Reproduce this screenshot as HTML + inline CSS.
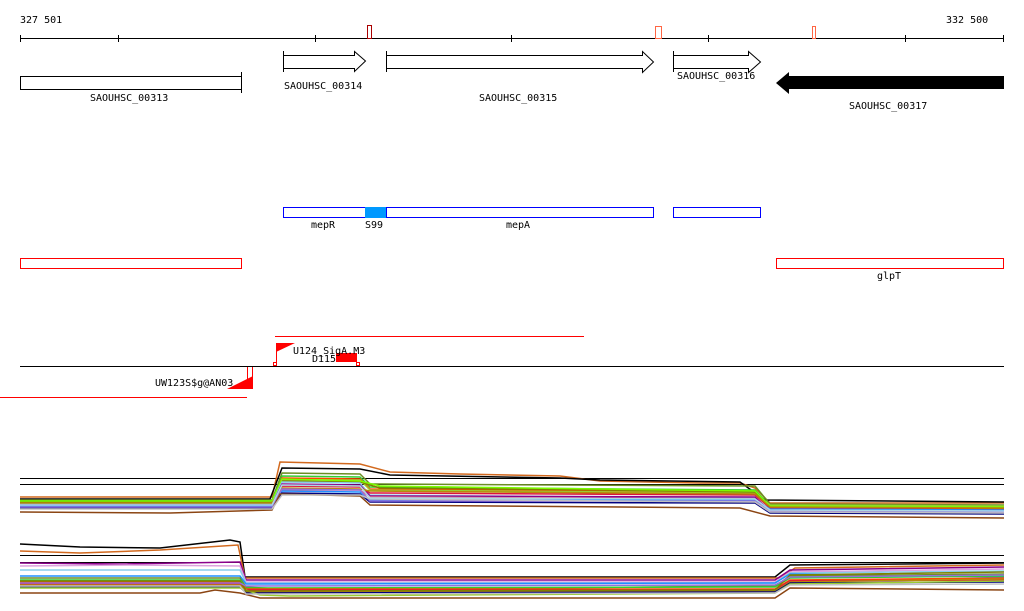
<!DOCTYPE html>
<html><head><meta charset="utf-8"><style>
html,body{margin:0;padding:0;background:#fff;}
svg{display:block}
text{font-family:"DejaVu Sans Mono","Liberation Mono",monospace;font-size:10px;fill:#000}
</style></head><body>
<svg width="1024" height="611" viewBox="0 0 1024 611" xmlns="http://www.w3.org/2000/svg" shape-rendering="crispEdges">
<text x="20" y="23">327 501</text>
<text x="946" y="23">332 500</text>
<line x1="20" y1="38.5" x2="1004" y2="38.5" stroke="#000"/>
<g stroke="#000">
<line x1="20.5" y1="35" x2="20.5" y2="42"/><line x1="118.5" y1="35" x2="118.5" y2="42"/>
<line x1="315.5" y1="35" x2="315.5" y2="42"/><line x1="511.5" y1="35" x2="511.5" y2="42"/>
<line x1="708.5" y1="35" x2="708.5" y2="42"/><line x1="905.5" y1="35" x2="905.5" y2="42"/>
<line x1="1003.5" y1="35" x2="1003.5" y2="42"/></g>
<rect x="367.5" y="25.5" width="4" height="13" fill="#fff" stroke="#a00"/>
<rect x="655.5" y="26.5" width="6" height="12" fill="#fff" stroke="#f64"/>
<rect x="812.5" y="26.5" width="3" height="12" fill="#fff" stroke="#f64"/>
<rect x="20.5" y="76.5" width="221" height="13" fill="#fff" stroke="#000"/>
<line x1="241.5" y1="72" x2="241.5" y2="93" stroke="#000"/>
<text x="90" y="101">SAOUHSC_00313</text>
<g fill="#fff" stroke="#000" shape-rendering="auto">
<polygon points="283.5,55.5 354.5,55.5 354.5,51.5 365.5,61 354.5,71.5 354.5,68.5 283.5,68.5"/>
<polygon points="386.5,55.5 642.5,55.5 642.5,51.5 653.5,62 642.5,72.5 642.5,68.5 386.5,68.5"/>
<polygon points="673.5,55.5 748.5,55.5 748.5,51.5 760.5,62 748.5,72.5 748.5,68.5 673.5,68.5"/>
</g>
<line x1="283.5" y1="51" x2="283.5" y2="72" stroke="#000"/>
<line x1="386.5" y1="51" x2="386.5" y2="72" stroke="#000"/>
<line x1="673.5" y1="51" x2="673.5" y2="72" stroke="#000"/>
<text x="284" y="89">SAOUHSC_00314</text>
<text x="479" y="101">SAOUHSC_00315</text>
<text x="677" y="79">SAOUHSC_00316</text>
<polygon points="1004,76 789,76 789,72 776,83 789,94 789,89 1004,89" fill="#000" shape-rendering="auto"/>
<text x="849" y="109">SAOUHSC_00317</text>
<rect x="283.5" y="207.5" width="82" height="10" fill="#fff" stroke="#00f"/>
<rect x="365" y="207" width="21" height="11" fill="#09f"/>
<rect x="386.5" y="207.5" width="267" height="10" fill="#fff" stroke="#00f"/>
<rect x="673.5" y="207.5" width="87" height="10" fill="#fff" stroke="#00f"/>
<text x="311" y="228">mepR</text><text x="365" y="228">S99</text><text x="506" y="228">mepA</text>
<rect x="20.5" y="258.5" width="221" height="10" fill="#fff" stroke="#f00"/>
<rect x="776.5" y="258.5" width="227" height="10" fill="#fff" stroke="#f00"/>
<text x="877" y="279">glpT</text>
<line x1="275" y1="336.5" x2="584" y2="336.5" stroke="#f00"/>
<line x1="20" y1="366.5" x2="1004" y2="366.5" stroke="#000"/>
<line x1="0" y1="397.5" x2="247" y2="397.5" stroke="#f00"/>
<polygon points="276,343 295,343 276,352" fill="#f00" shape-rendering="auto"/>
<line x1="276.5" y1="343" x2="276.5" y2="364" stroke="#f00"/>
<rect x="273.5" y="362.5" width="3" height="3" fill="#fff" stroke="#f00"/>
<rect x="356.5" y="362.5" width="3" height="3" fill="#fff" stroke="#f00"/>
<rect x="336" y="353" width="21" height="9" fill="#f00"/>
<text x="293" y="354">U124_SigA.M3</text>
<text x="312" y="362">D115</text>
<polygon points="227,389 253,389 253,376" fill="#f00" shape-rendering="auto"/>
<line x1="247.5" y1="367" x2="247.5" y2="389" stroke="#f00"/>
<line x1="252.5" y1="367" x2="252.5" y2="389" stroke="#f00"/>
<text x="155" y="386">UW123S$g@AN03</text>
<g fill="none" stroke-width="1.5" shape-rendering="auto">
<line x1="20" y1="478.5" x2="1004" y2="478.5" stroke="#000" stroke-width="1"/>
<line x1="20" y1="484.5" x2="1004" y2="484.5" stroke="#000" stroke-width="1"/>
<polyline stroke="#d2691e" points="20,497 272,497 280,462 360,464 390,472 460,474 560,476 600,481 700,483 740,483 755,488 770,503 1004,503"/>
<polyline stroke="#000" points="20,499 270,499 282,468 360,469 390,475 560,478 600,480 740,482 765,500 1004,502"/>
<polyline stroke="#6b8e23" points="20,500 272,500 282,473 360,474 370,484 755,486 770,504 1004,505"/>
<polyline stroke="#32cd32" points="20,501 272,501 282,476 360,477 370,487 755,490 770,506 1004,507"/>
<polyline stroke="#ff4500" points="20,502 272,502 282,478 360,479 370,489 755,492 770,508 1004,509"/>
<polyline stroke="#9acd32" points="20,503 272,503 282,480 360,480 370,490 755,493 770,505 1004,506"/>
<polyline stroke="#808000" points="20,502 272,502 282,481 360,482 380,488 600,490 755,492 770,507 1004,508"/>
<polyline stroke="#7cfc00" points="20,501 272,501 282,479 360,481 380,486 600,489 755,491 770,506 1004,507"/>
<polyline stroke="#87ceeb" points="20,504 272,504 282,482 360,483 370,495 755,498 770,510 1004,511"/>
<polyline stroke="#8b008b" points="20,505 272,505 282,484 360,485 370,496 755,497 770,511 1004,512"/>
<polyline stroke="#dc143c" points="20,506 272,506 282,486 360,487 370,493 755,495 770,508 1004,510"/>
<polyline stroke="#b8860b" points="20,503 272,503 282,488 360,489 370,491 755,494 770,507 1004,508"/>
<polyline stroke="#db7093" points="20,507 272,507 282,490 360,490 370,497 755,499 770,512 1004,513"/>
<polyline stroke="#1e90ff" points="20,506 272,506 282,491 360,492 370,500 755,500 770,509 1004,510"/>
<polyline stroke="#000080" points="20,508 272,508 282,493 360,494 370,502 755,503 770,513 1004,514"/>
<polyline stroke="#9370db" points="20,507 272,507 282,489 360,490 370,501 755,501 770,511 1004,512"/>
<polyline stroke="#8b4513" points="20,512 170,513 272,510 280,494 360,496 370,505 740,508 770,516 1004,518"/>
<polyline stroke="#c0c0c0" points="20,509 272,509 282,495 360,495 370,499 755,502 770,512 1004,513"/>
<polyline stroke="#add8e6" points="20,505 272,505 282,485 360,486 370,498 755,499 770,510 1004,511"/>
</g>
<g fill="none" stroke-width="1.5" shape-rendering="auto">
<line x1="20" y1="555.5" x2="1004" y2="555.5" stroke="#000" stroke-width="1"/>
<line x1="20" y1="562.5" x2="1004" y2="562.5" stroke="#000" stroke-width="1"/>
<polyline stroke="#000" points="20,544 80,547 160,548 230,540 240,542 245,577 775,577 790,565 1004,563"/>
<polyline stroke="#d2691e" points="20,551 80,553 160,550 238,545 245,578 780,578 795,568 1004,565"/>
<polyline stroke="#8b008b" points="20,563 120,564 240,562 246,580 775,580 790,570 1004,567"/>
<polyline stroke="#dda0dd" points="20,566 130,565 240,566 246,582 775,582 790,572 1004,569"/>
<polyline stroke="#87ceeb" points="20,570 240,570 246,583 775,583 790,573 1004,571"/>
<polyline stroke="#1e90ff" points="20,576 240,576 246,584 775,583 790,574 1004,577"/>
<polyline stroke="#6b8e23" points="20,578 240,578 246,587 300,590 775,586 790,576 1004,574"/>
<polyline stroke="#32cd32" points="20,580 240,580 246,588 775,587 790,578 1004,576"/>
<polyline stroke="#ff4500" points="20,582 240,582 246,589 775,589 790,580 1004,578"/>
<polyline stroke="#dc143c" points="20,584 240,584 246,590 775,590 790,581 1004,580"/>
<polyline stroke="#b8860b" points="20,585 240,585 246,592 775,591 790,582 1004,579"/>
<polyline stroke="#000080" points="20,587 240,587 246,593 775,592 790,583 1004,582"/>
<polyline stroke="#9acd32" points="20,588 240,588 260,595 290,596 775,593 790,584 1004,581"/>
<polyline stroke="#8b4513" points="20,593 200,593 215,590 240,593 260,598 775,598 790,588 1004,590"/>
<polyline stroke="#c0c0c0" points="20,586 240,586 246,594 775,593 790,585 1004,584"/>
<polyline stroke="#808000" points="20,581 240,581 246,591 775,590 790,575 1004,572"/>
<polyline stroke="#9370db" points="20,583 240,583 246,586 775,585 790,577 1004,575"/>
</g>
</svg>
</body></html>
